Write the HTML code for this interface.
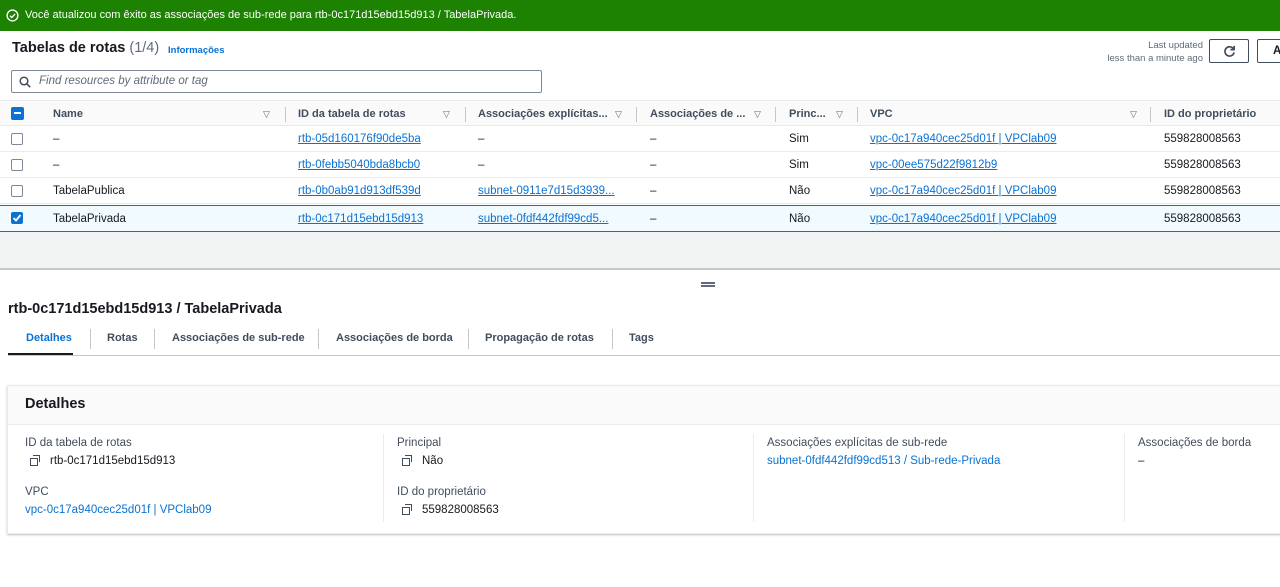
<!DOCTYPE html>
<html><head><meta charset="utf-8"><style>
*{box-sizing:border-box;margin:0;padding:0}
body{width:1280px;height:587px;overflow:hidden;background:#fff;font-family:"Liberation Sans",sans-serif;font-size:11.5px;color:#16191f;position:relative}
.abs{position:absolute;white-space:nowrap}
.flash{position:absolute;left:0;top:0;width:1280px;height:31px;background:#1d8102;color:#fff;font-size:11px}
a,.lnk{color:#0972d3;text-decoration:underline}
.blue{color:#0972d3}
.hdr{position:absolute;left:0;top:100px;width:1280px;height:26px;background:#fafafa;border-top:1px solid #e9ebed;border-bottom:1px solid #e9ebed;font-weight:bold;color:#414d5c;font-size:11px}
.sep{position:absolute;top:6px;width:1px;height:15px;background:#c6c6cd}
.tri{position:absolute;top:8px;font-size:9px;color:#5f6b7a;font-weight:normal}
.row{position:absolute;left:0;width:1280px;height:26px;border-bottom:1px solid #e9ebed}
.cb{position:absolute;left:11px;top:7px;width:12px;height:12px;border:1.5px solid #7d8998;border-radius:2px;background:#fff}
.row span{position:absolute;top:7px;white-space:nowrap}
.tab{position:absolute;top:332px;font-weight:bold;color:#414d5c;font-size:11px}
.tsep{position:absolute;top:329px;width:1px;height:20px;background:#c6c6cd}
.copy{display:inline-block;width:10px;height:10px;position:relative;margin-right:10px;vertical-align:-1px}
.copy:before{content:"";position:absolute;left:0;top:3px;width:6px;height:6px;border:1.5px solid #414d5c}
.copy:after{content:"";position:absolute;left:3px;top:0;width:6px;height:6px;border-top:1.5px solid #414d5c;border-right:1.5px solid #414d5c}
.lbl{color:#414d5c}
</style></head><body>
<div class="flash"><svg class="abs" style="left:6px;top:9px" width="13" height="13" viewBox="0 0 14 14"><circle cx="7" cy="7" r="5.8" fill="none" stroke="#fff" stroke-width="1.5"/><path d="M4.3 7.2l1.9 1.9 3.6-3.8" fill="none" stroke="#fff" stroke-width="1.5"/></svg><span class="abs" style="left:25px;top:9px">Você atualizou com êxito as associações de sub-rede para rtb-0c171d15ebd15d913 / TabelaPrivada.</span></div>

<span class="abs" style="left:12px;top:40px;font-size:14.5px;font-weight:bold">Tabelas de rotas <span style="font-weight:normal;color:#5f6b7a">(1/4)</span></span>
<span class="abs blue" style="left:168px;top:45px;font-size:9.5px;font-weight:bold">Informações</span>
<div class="abs" style="right:77px;top:39px;font-size:9.5px;color:#5f6b7a;text-align:right;line-height:13px">Last updated<br>less than a minute ago</div>
<div class="abs" style="left:1209px;top:39px;width:40px;height:24px;border:1px solid #414d5c;border-radius:2px"><svg style="position:absolute;left:13px;top:5px" width="13" height="13" viewBox="0 0 14 14"><path d="M11.5 4.5A5 5 0 1 0 12 8" fill="none" stroke="#414d5c" stroke-width="1.8"/><path d="M12 1v4H8" fill="none" stroke="#414d5c" stroke-width="1.8"/></svg></div>
<div class="abs" style="left:1257px;top:39px;width:40px;height:24px;border:1px solid #414d5c;border-radius:2px;font-weight:bold;padding:5px 0 0 15px">A</div>
<div class="abs" style="left:11px;top:70px;width:531px;height:23px;border:1px solid #7d8998;border-radius:2px"><svg style="position:absolute;left:7px;top:5px" width="12" height="12" viewBox="0 0 12 12"><circle cx="5" cy="5" r="3.8" fill="none" stroke="#414d5c" stroke-width="1.5"/><path d="M7.8 7.8l3.4 3.4" stroke="#414d5c" stroke-width="1.5"/></svg><span style="position:absolute;left:27px;top:4px;font-style:italic;color:#5f6b7a">Find resources by attribute or tag</span></div>

<div class="hdr">
<div class="abs" style="left:11px;top:6px;width:13px;height:13px;background:#0972d3;border-radius:2px"><div style="position:absolute;left:3px;top:5px;width:7px;height:2px;background:#fff"></div></div>
<span class="abs" style="left:53px;top:7px">Name</span><span class="tri" style="left:263px">▽</span><div class="sep" style="left:285px"></div>
<span class="abs" style="left:298px;top:7px">ID da tabela de rotas</span><span class="tri" style="left:443px">▽</span><div class="sep" style="left:465px"></div>
<span class="abs" style="left:478px;top:7px">Associações explícitas...</span><span class="tri" style="left:615px">▽</span><div class="sep" style="left:636px"></div>
<span class="abs" style="left:650px;top:7px">Associações de ...</span><span class="tri" style="left:754px">▽</span><div class="sep" style="left:775px"></div>
<span class="abs" style="left:789px;top:7px">Princ...</span><span class="tri" style="left:836px">▽</span><div class="sep" style="left:857px"></div>
<span class="abs" style="left:870px;top:7px">VPC</span><span class="tri" style="left:1130px">▽</span><div class="sep" style="left:1150px"></div>
<span class="abs" style="left:1164px;top:7px">ID do proprietário</span>
</div>

<div class="row" style="top:126px"><div class="cb"></div><span style="left:53px">–</span><span class="lnk" style="left:298px">rtb-05d160176f90de5ba</span><span style="left:478px">–</span><span style="left:650px">–</span><span style="left:789px">Sim</span><span class="lnk" style="left:870px">vpc-0c17a940cec25d01f | VPClab09</span><span style="left:1164px">559828008563</span></div>
<div class="row" style="top:152px"><div class="cb"></div><span style="left:53px">–</span><span class="lnk" style="left:298px">rtb-0febb5040bda8bcb0</span><span style="left:478px">–</span><span style="left:650px">–</span><span style="left:789px">Sim</span><span class="lnk" style="left:870px">vpc-00ee575d22f9812b9</span><span style="left:1164px">559828008563</span></div>
<div class="row" style="top:178px"><div class="cb"></div><span style="left:53px">TabelaPublica</span><span class="lnk" style="left:298px">rtb-0b0ab91d913df539d</span><span class="lnk" style="left:478px">subnet-0911e7d15d3939...</span><span style="left:650px">–</span><span style="left:789px">Não</span><span class="lnk" style="left:870px">vpc-0c17a940cec25d01f | VPClab09</span><span style="left:1164px">559828008563</span></div>
<div class="row" style="top:205px;height:27px;background:#f1faff;border:1px solid #0972d3;border-left:none;border-right:none"><div class="cb" style="background:#0972d3;border-color:#0972d3;top:6px"><svg style="position:absolute;left:0;top:0" width="10" height="10" viewBox="0 0 10 10"><path d="M1.5 5l2.5 2.5L8.5 2" fill="none" stroke="#fff" stroke-width="1.8"/></svg></div><span style="left:53px">TabelaPrivada</span><span class="lnk" style="left:298px">rtb-0c171d15ebd15d913</span><span class="lnk" style="left:478px">subnet-0fdf442fdf99cd5...</span><span style="left:650px">–</span><span style="left:789px">Não</span><span class="lnk" style="left:870px">vpc-0c17a940cec25d01f | VPClab09</span><span style="left:1164px">559828008563</span></div>
<div class="abs" style="left:0;top:232px;width:1280px;height:38px;background:#f2f3f3;border-bottom:2px solid #c6c6cd"></div>
<div class="abs" style="left:701px;top:282px;width:14px;height:1.5px;background:#5f6b7a"></div>
<div class="abs" style="left:701px;top:285px;width:14px;height:1.5px;background:#5f6b7a"></div>

<span class="abs" style="left:8px;top:301px;font-size:14.5px;font-weight:bold">rtb-0c171d15ebd15d913 / TabelaPrivada</span>
<span class="tab" style="left:26px;color:#0972d3">Detalhes</span><div class="abs" style="left:8px;top:353px;width:65px;height:3px;background:#16191f"></div>
<div class="tsep" style="left:90px"></div><span class="tab" style="left:107px">Rotas</span>
<div class="tsep" style="left:154px"></div><span class="tab" style="left:172px">Associações de sub-rede</span>
<div class="tsep" style="left:318px"></div><span class="tab" style="left:336px">Associações de borda</span>
<div class="tsep" style="left:468px"></div><span class="tab" style="left:485px">Propagação de rotas</span>
<div class="tsep" style="left:612px"></div><span class="tab" style="left:629px">Tags</span>
<div class="abs" style="left:8px;top:355px;width:1272px;height:1px;background:#c6c6cd"></div>

<div class="abs" style="left:7px;top:385px;width:1280px;height:149px;border:1px solid #e9ebed;box-shadow:0 1px 2px rgba(0,0,0,.25)">
<div style="position:absolute;left:0;top:0;right:0;height:39px;background:#fafafa;border-bottom:1px solid #e9ebed"></div>
<span class="abs" style="left:17px;top:10px;font-size:14.5px;font-weight:bold">Detalhes</span>
<div class="abs" style="left:375px;top:48px;width:1px;height:88px;background:#e9ebed"></div>
<div class="abs" style="left:745px;top:48px;width:1px;height:88px;background:#e9ebed"></div>
<div class="abs" style="left:1116px;top:48px;width:1px;height:88px;background:#e9ebed"></div>
<span class="abs lbl" style="left:17px;top:51px">ID da tabela de rotas</span>
<span class="abs" style="left:22px;top:69px"><i class="copy"></i>rtb-0c171d15ebd15d913</span>
<span class="abs lbl" style="left:17px;top:100px">VPC</span>
<span class="abs blue" style="left:17px;top:118px">vpc-0c17a940cec25d01f | VPClab09</span>
<span class="abs lbl" style="left:389px;top:51px">Principal</span>
<span class="abs" style="left:394px;top:69px"><i class="copy"></i>Não</span>
<span class="abs lbl" style="left:389px;top:100px">ID do proprietário</span>
<span class="abs" style="left:394px;top:118px"><i class="copy"></i>559828008563</span>
<span class="abs lbl" style="left:759px;top:51px">Associações explícitas de sub-rede</span>
<span class="abs blue" style="left:759px;top:69px">subnet-0fdf442fdf99cd513 / Sub-rede-Privada</span>
<span class="abs lbl" style="left:1130px;top:51px">Associações de borda</span>
<span class="abs" style="left:1130px;top:69px">–</span>
</div>
</body></html>
